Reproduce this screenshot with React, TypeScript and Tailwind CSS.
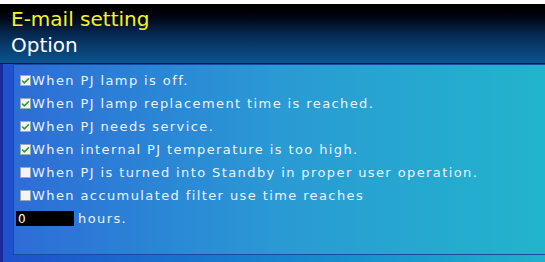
import { Check } from 'lucide-react';

const OPCIONES = [
  { texto: 'When PJ lamp is off.', marcado: true },
  { texto: 'When PJ lamp replacement time is reached.', marcado: true },
  { texto: 'When PJ needs service.', marcado: true },
  { texto: 'When internal PJ temperature is too high.', marcado: true },
  { texto: 'When PJ is turned into Standby in proper user operation.', marcado: false },
  { texto: 'When accumulated filter use time reaches', marcado: false },
];

function Casilla({ marcado }: { marcado: boolean }) {
  return (
    <span className="flex h-[11px] w-[11px] shrink-0 items-center justify-center border border-[#9aa7b8] bg-[#f4f4f4]">
      {marcado && <Check className="h-[10px] w-[10px] text-[#21a121]" strokeWidth={4} />}
    </span>
  );
}

export default function App() {
  return (
    <div className="flex h-[262px] w-[545px] flex-col overflow-hidden bg-white pt-[4px] font-['DejaVu_Sans',sans-serif]">
      <div className="flex h-[59px] flex-col bg-gradient-to-b from-[#000000] via-[#06284f] to-[#0a5592] pl-[11px] pt-[5px] leading-none">
        <span className="text-[20px] text-[#f5f520]">E-mail setting</span>
        <span className="mt-[6px] text-[20px] text-white">Option</span>
      </div>
      <div className="h-[1px] bg-[#031a3a]" />
      <div className="flex flex-1 border-l-[3px] border-[#1a2a9a] bg-gradient-to-r from-[#2050cc] to-[#20b0cc] pb-[7px] pl-[10px]">
        <div className="flex flex-1 flex-col border-l border-t border-b border-[#1a4aa0] bg-gradient-to-r from-[#2e6cd6] via-[#2a9ad4] to-[#22b4cc] pt-[4px] text-[13px] tracking-[1.4px] text-[#eaf2ff]">
          {OPCIONES.map(({ texto, marcado }) => (
            <div key={texto} className="flex h-[23px] items-center gap-[1px] pl-[6px]">
              <Casilla marcado={marcado} />
              <span>{texto}</span>
            </div>
          ))}
          <div className="flex h-[23px] items-center gap-[4px] pl-[2px]">
            <span className="flex h-[15px] w-[58px] items-center bg-black pl-[2px] text-[12px] text-white">0</span>
            <span>hours.</span>
          </div>
        </div>
      </div>
    </div>
  );
}
